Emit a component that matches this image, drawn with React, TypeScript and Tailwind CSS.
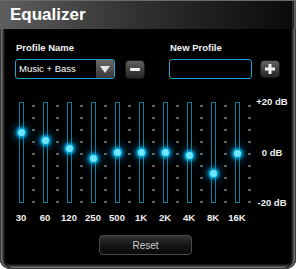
import React, { Fragment } from "react";

const bands = [
  { label: "30", pos: 30 },
  { label: "60", pos: 38 },
  { label: "120", pos: 46 },
  { label: "250", pos: 56 },
  { label: "500", pos: 50 },
  { label: "1K", pos: 50 },
  { label: "2K", pos: 50 },
  { label: "4K", pos: 53 },
  { label: "8K", pos: 71 },
  { label: "16K", pos: 51 },
];

const dashes = [0, 1, 2, 3, 4, 5, 6, 7, 8];

export default function App() {
  return (
    <div
      className="w-[296px] h-[269px] bg-black flex flex-col rounded-b-[10px] overflow-hidden"
      style={{ fontFamily: '"Liberation Sans", Arial, sans-serif' }}
    >
      <div className="h-[29px] shrink-0 flex items-center pl-[10px] bg-gradient-to-r from-[#5e5e5e] via-[#2e2e2e] to-[#0a0a0a] shadow-[inset_0_1px_0_#6a6a6a,inset_-2px_0_0_#5a5a5a,inset_-4px_0_0_#2a2a2a]">
        <span className="text-[17px] font-bold text-white leading-none">Equalizer</span>
      </div>
      <div className="flex-1 flex flex-col rounded-b-[10px] shadow-[inset_1px_0_0_#3a3a3a,inset_2px_0_0_#6e6e6e,inset_3px_0_0_#4e4e4e,inset_4px_0_0_#2a2a2a,inset_5px_0_0_#141414,inset_-1px_0_0_#3a3a3a,inset_-2px_0_0_#6e6e6e,inset_-3px_0_0_#4e4e4e,inset_-4px_0_0_#2a2a2a,inset_-5px_0_0_#141414,inset_0_-1px_0_#3a3a3a,inset_0_-2px_0_#6e6e6e,inset_0_-3px_0_#4e4e4e,inset_0_-4px_0_#2a2a2a,inset_0_-5px_0_#141414]">
        <div className="flex pt-[13px] pl-[15px]">
          <div className="flex flex-col">
            <div className="pl-[1px] text-[9.5px] leading-[12px] font-bold text-[#f2f2f2]">Profile Name</div>
            <div className="mt-[5px] flex items-start gap-[10px]">
              <div className="w-[100px] h-[20px] border border-[#1ca4d6] rounded-[3px] flex items-stretch overflow-hidden bg-black">
                <div className="flex-1 flex items-center pl-[3px] text-[9.5px] text-white">Music + Bass</div>
                <div className="w-[18px] flex items-center justify-center bg-gradient-to-b from-[#6a6a6a] to-[#3a3a3a]">
                  <svg width="10" height="7" viewBox="0 0 10 7">
                    <polygon points="0,0 10,0 5,7" fill="#e8e8e8" />
                  </svg>
                </div>
              </div>
              <div className="w-[20px] h-[19px] mt-[1px] rounded-[4px] border border-[#1a1a1a] bg-gradient-to-b from-[#626262] to-[#262626] flex items-center justify-center">
                <div className="w-[10px] h-[3px] rounded-[1px] bg-[#f0f0f0]" />
              </div>
            </div>
          </div>
          <div className="flex flex-col ml-[24px]">
            <div className="pl-[1px] text-[9.5px] leading-[12px] font-bold text-[#f2f2f2]">New Profile</div>
            <div className="mt-[5px] flex items-start gap-[8px]">
              <div className="w-[83px] h-[20px] border border-[#1ca4d6] rounded-[3px] bg-black" />
              <div className="w-[20px] h-[18px] mt-[1px] rounded-[4px] border border-[#1a1a1a] bg-gradient-to-b from-[#626262] to-[#262626] flex items-center justify-center">
                <svg width="10" height="10" viewBox="0 0 10 10">
                  <rect x="3.5" y="0" width="3" height="10" fill="#f0f0f0" />
                  <rect x="0" y="3.5" width="10" height="3" fill="#f0f0f0" />
                </svg>
              </div>
            </div>
          </div>
        </div>

        <div className="flex mt-[23px] pl-[19px]">
          <div className="flex gap-[8px]">
            {bands.map((b) => (
              <Fragment key={b.label}>
                <div className="relative w-[5px] h-[101px] border border-[#127d97] bg-black">
                  <div
                    className="absolute left-1/2 w-[7px] h-[7px] -ml-[3.5px] -mt-[3.5px] rounded-full bg-[#6fe6ff] shadow-[0_0_3px_2px_rgba(0,200,255,0.85),0_0_8px_4px_rgba(0,160,240,0.45)]"
                    style={{ top: b.pos - 1 }}
                  />
                </div>
                <div className="w-[3px] h-[101px] flex flex-col pt-[3px] gap-[10px]">
                  {dashes.map((d) => (
                    <div key={d} className="h-[2px] bg-[#5e5e5e]" />
                  ))}
                </div>
              </Fragment>
            ))}
          </div>
          <div className="w-[40px] ml-[1px] -my-[6px] flex flex-col justify-between items-center text-[9.5px] leading-[12px] font-bold text-[#f2f2f2] whitespace-nowrap">
            <span>+20 dB</span>
            <span>0 dB</span>
            <span>-20 dB</span>
          </div>
        </div>

        <div className="flex mt-[9px] pl-[9px]">
          {bands.map((b) => (
            <div key={b.label} className="w-[24px] text-center text-[9.5px] leading-[12px] font-bold text-[#f2f2f2]">
              {b.label}
            </div>
          ))}
        </div>

        <div className="mt-[11px] ml-[99px] w-[93px] h-[20px] rounded-[4px] border border-[#4a4a4a] bg-gradient-to-b from-[#333333] via-[#161616] to-[#0a0a0a] flex items-center justify-center text-[10px] text-[#cfcfcf]">
          Reset
        </div>
      </div>
    </div>
  );
}
